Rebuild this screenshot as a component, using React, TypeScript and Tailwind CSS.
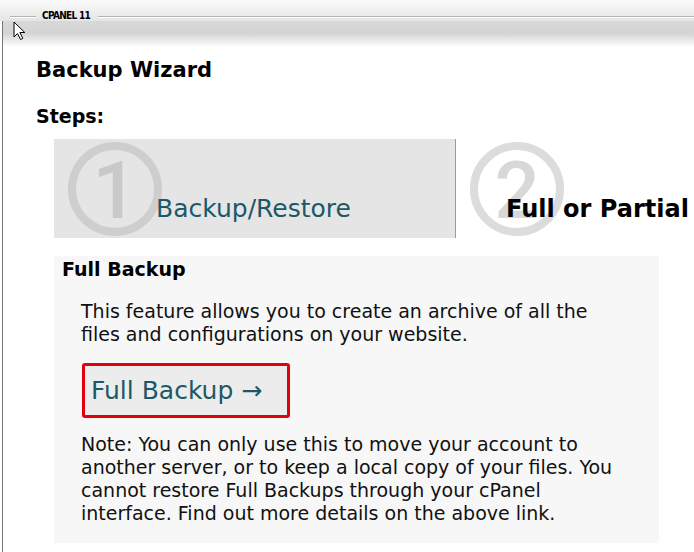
export default function App() {
  return (
    <div className="relative w-[694px] h-[552px] overflow-hidden bg-white text-black font-['DejaVu_Sans',sans-serif]">
      {/* header top row */}
      <div className="h-[21px] bg-gradient-to-b from-[#fafafa] to-[#e4e4e4] flex items-start pt-[10px]">
        <div className="ml-[10px] mt-[6px] w-[26px] h-px bg-[#b4b4b4] shadow-[0_1px_0_#ffffff]" />
        <div className="ml-[6px] text-[10px] leading-[11px] font-bold tracking-[-0.7px] font-['DejaVu_Sans_Condensed','DejaVu_Sans',sans-serif] text-black">
          CPANEL 11
        </div>
        <div className="ml-[8px] mt-[6px] flex-1 h-px bg-[#b4b4b4] shadow-[0_1px_0_#ffffff]" />
      </div>

      <div className="ml-[2px] border-l border-[#777] h-[531px]">
        <div className="h-[25px] bg-gradient-to-b from-[#d8d8d8] via-[#d4d4d4] to-[#fcfcfc]" />
        <div className="pl-[33px] pt-[12px]">
          <div className="text-[21px] leading-[25px] font-bold">Backup Wizard</div>
          <div className="mt-[22px] text-[19px] leading-[23px] font-bold">Steps:</div>

          {/* steps */}
          <div className="mt-[11px] ml-[18px] flex h-[99px] whitespace-nowrap">
            <div className="relative w-[402px] shrink-0 bg-[#e5e5e5] border-r border-[#9b9b9b] flex items-end pl-[102px] pb-[14px]">
              <div className="absolute left-[14px] top-[3px] w-[94px] h-[94px] rounded-full border-[8px] border-[#cecece] flex items-center justify-center">
                <span className="text-[80px] leading-none pt-[4px] font-medium text-[#c9c9c9] font-['Roboto','Liberation_Sans',Arial,sans-serif]">1</span>
              </div>
              <span className="relative text-[25px] leading-[30px] text-[#1d5866]">Backup/Restore</span>
            </div>
            <div className="relative flex-1 flex items-end pl-[50px] pb-[14px]">
              <div className="absolute left-[14px] top-[3px] w-[94px] h-[94px] rounded-full border-[8px] border-[#dcdcdc] flex items-center justify-center">
                <span className="text-[80px] leading-none pt-[4px] font-medium text-[#d8d8d8] font-['Roboto','Liberation_Sans',Arial,sans-serif]">2</span>
              </div>
              <span className="relative text-[24px] leading-[30px] font-bold text-black">Full or Partial</span>
            </div>
          </div>

          {/* panel */}
          <div className="mt-[18px] ml-[18px] w-[605px] bg-[#f7f7f7] pt-[2px] pb-[18px]">
            <div className="pl-[8px] text-[19px] leading-[23px] font-bold">Full Backup</div>
            <p className="mt-[19px] ml-[27px] w-[548px] text-[19px] leading-[23px] text-[#111]">
              This feature allows you to create an archive of all the files and configurations on your website.
            </p>
            <div className="mt-[17px] ml-[28px] w-[208px] h-[55px] border-[3px] border-[#e3000f] rounded-[3px] bg-[#ececec] pl-[6px] pt-[10px] text-[25px] leading-[30px] text-[#1d5866] whitespace-nowrap">
              Full Backup →
            </div>
            <p className="mt-[15px] ml-[27px] w-[548px] text-[19px] leading-[23px] text-[#111]">
              Note: You can only use this to move your account to another server, or to keep a local copy of your files. You cannot restore Full Backups through your cPanel interface. Find out more details on the above link.
            </p>
          </div>
        </div>
      </div>

      {/* mouse cursor */}
      <svg className="absolute left-[13px] top-[21px]" width="14" height="20" viewBox="0 0 14 20">
        <path d="M1 1 L1 16 L4.5 12.5 L7.5 18.5 L9.8 17.4 L6.9 11.5 L11.8 11.5 Z" fill="#ffffff" stroke="#000000" strokeWidth="1" strokeLinejoin="miter" />
      </svg>
    </div>
  );
}
